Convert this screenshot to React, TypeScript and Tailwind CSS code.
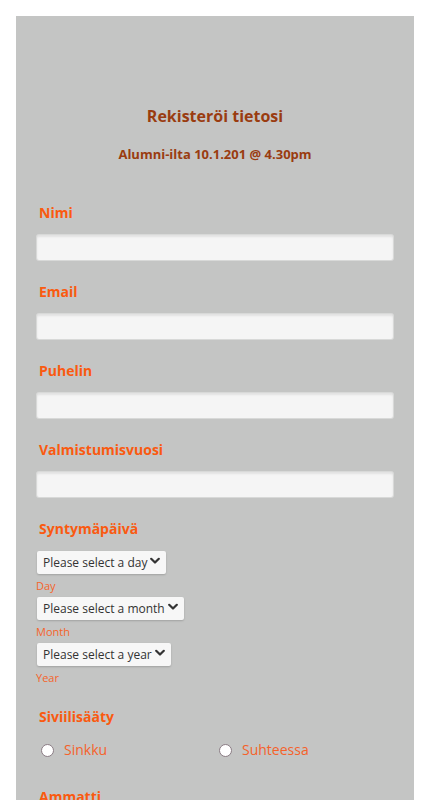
import React from "react";

const font = { fontFamily: '"Open Sans", "Liberation Sans", sans-serif' };

function Chevron() {
  return (
    <svg width="10" height="7" viewBox="0 0 10 7" className="pointer-events-none absolute right-[6px] top-1/2 -translate-y-1/2">
      <path d="M1.2 1.2 L5 5 L8.8 1.2" fill="none" stroke="#333" strokeWidth="2.2" strokeLinecap="round" strokeLinejoin="round" />
    </svg>
  );
}

function Select({ text, w }: { text: string; w: string }) {
  return (
    <div className={`relative h-[23px] ${w}`}>
      <select
        className="h-full w-full appearance-none rounded-[2px] bg-[#f7f7f7] pl-[6px] pr-[16px] text-[12px] leading-[23px] text-[#333] shadow-[0_1px_2px_rgba(0,0,0,0.18)] outline-none"
        style={font}
        defaultValue=""
      >
        <option value="">{text}</option>
      </select>
      <Chevron />
    </div>
  );
}

function Label({ children }: { children: React.ReactNode }) {
  return <div className="ml-[2px] text-[14px] font-bold leading-[20px] text-[#fa5a10]">{children}</div>;
}

function TextField({ label, first }: { label: string; first?: boolean }) {
  return (
    <div className={first ? "" : "mt-[22px]"}>
      <Label>{label}</Label>
      <input
        type="text"
        className="mt-[12px] block h-[25px] w-full rounded-[2px] bg-[#f5f5f5] shadow-[inset_0_2px_2px_rgba(0,0,0,0.08),0_0_0_1px_rgba(255,255,255,0.35)] outline-none"
      />
    </div>
  );
}

function Radio({ label }: { label: string }) {
  return (
    <label className="flex h-[20px] items-center">
      <input
        type="radio"
        name="status"
        className="ml-[4px] h-[13px] w-[13px] appearance-none rounded-full border border-[#8a7c84] bg-white"
      />
      <span className="ml-[10px] text-[14px] leading-[20px] text-[#f5622a]">{label}</span>
    </label>
  );
}

export default function App() {
  return (
    <div className="min-h-[800px] bg-white pt-[16px] pl-[16px]" style={font}>
      <div className="w-[398px] bg-[#c4c5c4] px-[21px] pt-[89px] pb-[40px]">
        <h1 className="text-center text-[16px] font-bold leading-[22px] text-[#9a3c10]">Rekisteröi tietosi</h1>
        <h2 className="mt-[18px] text-center text-[13px] font-bold leading-[18px] text-[#9a3c10]">Alumni-ilta 10.1.201 @ 4.30pm</h2>

        <div className="mt-[40px]">
          <TextField label="Nimi" first />
          <TextField label="Email" />
          <TextField label="Puhelin" />
          <TextField label="Valmistumisvuosi" />

          <div className="mt-[22px]">
            <Label>Syntymäpäivä</Label>
            <div className="mt-[10px]">
              <Select text="Please select a day" w="w-[129px]" />
              <div className="mt-[6px] -ml-[1px] text-[11px] leading-[15px] text-[#f5642a]">Day</div>
              <div className="mt-[2px]">
                <Select text="Please select a month" w="w-[147px]" />
              </div>
              <div className="mt-[6px] -ml-[1px] text-[11px] leading-[15px] text-[#f5642a]">Month</div>
              <div className="mt-[2px]">
                <Select text="Please select a year" w="w-[134px]" />
              </div>
              <div className="mt-[6px] -ml-[1px] text-[11px] leading-[15px] text-[#f5642a]">Year</div>
            </div>
          </div>

          <div className="mt-[22px]">
            <Label>Siviilisääty</Label>
            <div className="mt-[13px] grid grid-cols-2">
              <Radio label="Sinkku" />
              <Radio label="Suhteessa" />
            </div>
          </div>

          <div className="mt-[27px]">
            <Label>Ammatti</Label>
            <input
              type="text"
              className="mt-[12px] block h-[25px] w-full rounded-[2px] bg-[#f5f5f5] shadow-[inset_0_2px_2px_rgba(0,0,0,0.08)] outline-none"
            />
          </div>
        </div>
      </div>
    </div>
  );
}
